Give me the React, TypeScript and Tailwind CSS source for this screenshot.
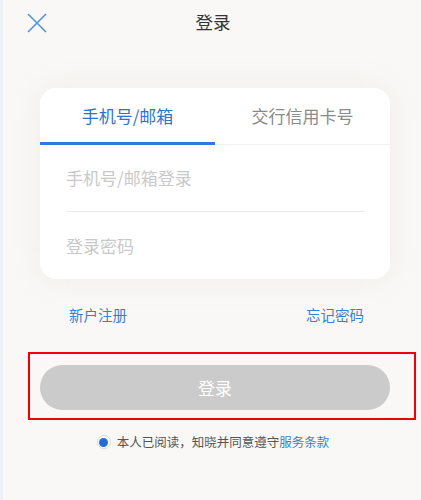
import React from "react"

const font = { fontFamily: '"Noto Sans CJK SC", "Noto Sans", sans-serif' }

export default function App() {
  return (
    <div
      className="h-[500px] w-full overflow-hidden border-l-[3px] border-[#edf1f8] bg-[#f9f8f6]"
      style={font}
    >
      {/* Header */}
      <header className="relative flex h-[44px] items-center justify-center">
        <button className="absolute top-[13px] left-[24px] h-[20px] w-[20px]">
          <svg viewBox="0 0 20 20" className="h-[20px] w-[20px]">
            <path
              d="M1 1 L19 19 M19 1 L1 19"
              stroke="#4a8fe2"
              strokeWidth="1.5"
              fill="none"
            />
          </svg>
        </button>
        <h1 className="pl-[2px] text-[17.5px] leading-none text-[#333]">登录</h1>
      </header>

      {/* Login card */}
      <div className="mt-[44px] ml-[37px] w-[350px] overflow-hidden rounded-[16px] bg-white shadow-[0_0_28px_rgba(210,190,170,0.18)]">
        <div className="flex h-[57px] border-b border-[#f1f1f1]">
          <div className="relative flex flex-1 items-center justify-center text-[17px] text-[#2e73cb]">
            手机号/邮箱
            <span className="absolute right-0 bottom-[-1px] left-0 h-[3px] bg-[#2f78d6]" />
          </div>
          <div className="flex flex-1 items-center justify-center text-[17px] text-[#8a8a8a]">
            交行信用卡号
          </div>
        </div>
        <div className="mx-[26px]">
          <div className="flex h-[67px] items-center border-b border-[#e9e9e9] text-[17px] text-[#c9c9c9]">
            手机号/邮箱登录
          </div>
          <div className="flex h-[67px] items-center text-[17px] text-[#c9c9c9]">
            登录密码
          </div>
        </div>
      </div>

      {/* Links */}
      <div className="mt-[25px] ml-[37px] flex w-[350px] justify-between pr-[26px] pl-[29px] text-[14.5px] leading-[22px] text-[#3a7fcf]">
        <span>新户注册</span>
        <span>忘记密码</span>
      </div>

      {/* Submit */}
      <div className="mt-[26px] ml-[25px] w-[388px] border-2 border-[#f00000] pt-[11px] pr-[24px] pb-[8px] pl-[10px]">
        <button className="flex h-[45px] w-full items-center justify-center rounded-full bg-[#cbcbcb] text-[17px] text-white">
          登录
        </button>
      </div>

      {/* Agreement */}
      <div className="mt-[13px] flex items-center justify-center pl-[2px] text-[12.5px] text-[#555]">
        <span className="mr-[6px] flex h-[14px] w-[14px] items-center justify-center rounded-full border border-[#d6d6d6] bg-white">
          <span className="h-[9px] w-[9px] rounded-full bg-[#1f6fd6]" />
        </span>
        本人已阅读，知晓并同意遵守
        <span className="text-[#3a7fcf]">服务条款</span>
      </div>
    </div>
  )
}
